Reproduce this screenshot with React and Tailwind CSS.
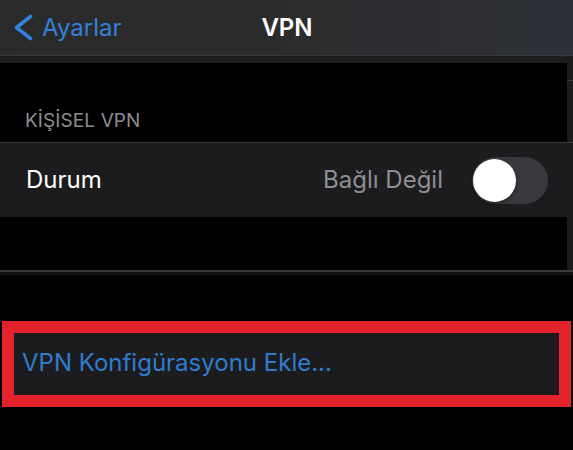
import React from "react";

const font = { fontFamily: "Inter, 'Noto Sans', sans-serif" };

function Strip({ h, children, line }) {
  return (
    <div className={`flex w-full ${h}`}>
      <div className="flex-1 bg-black flex flex-col justify-end">{children}</div>
      <div className="w-[6px] bg-[#1c1c1e] flex flex-col">
        {line ? <div className="mt-[17px] h-px bg-[#3a3a3c]" /> : null}
      </div>
    </div>
  );
}

export default function App() {
  return (
    <div className="w-[573px] h-[450px] bg-black overflow-hidden" style={font}>
      {/* Header */}
      <div className="relative h-[55px] bg-gradient-to-r from-[#2a2a2a] via-[#2c2c2d] to-[#2d3037] flex items-center">
        <div className="flex items-center pl-[12px] gap-[8px]">
          <svg width="22" height="28" viewBox="0 0 22 28" className="mt-[1px]">
            <path d="M18.5 2.5 L4.5 13.5 L18.5 24.5" fill="none" stroke="#3381d9" strokeWidth="3.6" strokeLinecap="round" strokeLinejoin="round" />
          </svg>
          <span className="text-[24px] leading-none text-[#3381d9]">Ayarlar</span>
        </div>
        <div className="absolute left-0 right-0 top-0 h-full flex items-center justify-center pointer-events-none">
          <span className="text-[24px] leading-none font-semibold text-white ml-[1px]">VPN</span>
        </div>
      </div>
      <div className="h-px bg-[#3a3a3c]" />
      <div className="h-[7px] bg-[#1d1d1f]" />

      {/* Section header */}
      <Strip h="h-[79px]" line>
        <div className="pl-[25px] pb-[12px] text-[19px] leading-none text-[#8d8d92] tracking-[0.1px]">KİŞİSEL VPN</div>
      </Strip>
      <div className="h-px bg-[#3a3a3c]" />

      {/* Row */}
      <div className="h-[74px] bg-[#1c1c1e] flex items-center justify-between pl-[26px] pr-[25px]">
        <span className="text-[24px] leading-none text-white">Durum</span>
        <div className="flex items-center gap-[29px]">
          <span className="text-[24px] leading-none text-[#8e8e93]">Bağlı Değil</span>
          <div className="w-[76px] h-[47px] rounded-full bg-[#39393d] flex items-center pl-[1px]">
            <div className="w-[43px] h-[43px] rounded-full bg-white shadow-[0_2px_4px_rgba(0,0,0,0.4)]" />
          </div>
        </div>
      </div>

      <Strip h="h-[53px]" />
      <div className="h-[2px] bg-[#3a3a3c]" />
      <div className="h-[3px] bg-[#111112]" />

      {/* Spacer */}
      <div className="h-[46px] bg-black" />

      {/* Highlighted row */}
      <div className="ml-[2px] w-[569px] h-[86px] border-[12px] border-[#e3222b] bg-[#1c1c1e] flex items-center pl-[8px] pb-[3px]">
        <span className="text-[24px] leading-none text-[#2f7ccf]">VPN Konfigürasyonu Ekle...</span>
      </div>
    </div>
  );
}
